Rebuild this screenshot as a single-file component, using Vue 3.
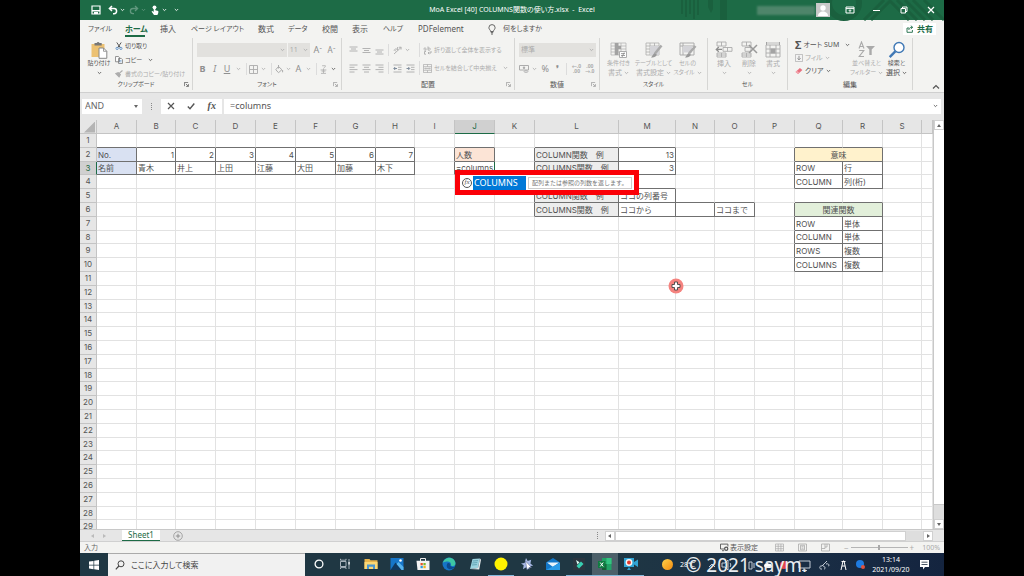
<script setup>
const menu = ['ファイル', 'ホーム', '挿入', 'ページ レイアウト', '数式', 'データ', '校閲', '表示', 'ヘルプ', 'PDFelement']
const kana = ['ファイル', 'ページ レイアウト', 'データ', 'ヘルプ']
const columns = 'ABCDEFGHIJKLMNOPQRST'.split('')
const widths = [17, 40, 39, 40, 40, 40, 40, 40, 39, 40, 40, 40, 84, 57, 39, 40, 40, 48, 40, 39]

const values = {
  A2: 'No.', B2: '1', C2: '2', D2: '3', E2: '4', F2: '5', G2: '6', H2: '7',
  A3: '名前', B3: '青木', C3: '井上', D3: '上田', E3: '江藤', F3: '大田', G3: '加藤', H3: '木下',
  J2: '人数', J3: '=columns',
  L2: 'COLUMN関数　例', M2: '13', L3: 'COLUMNS関数　例', M3: '3',
  L5: 'COLUMN関数　例', M5: 'ココの列番号', L6: 'COLUMNS関数　例', M6: 'ココから', N6: '', O6: 'ココまで',
  Q2: '意味', Q3: 'ROW', R3: '行', Q4: 'COLUMN', R4: '列(桁)',
  Q6: '関連関数', Q7: 'ROW', R7: '単体', Q8: 'COLUMN', R8: '単体', Q9: 'ROWS', R9: '複数', Q10: 'COLUMNS', R10: '複数',
}
const fills = { A2: 'blue', A3: 'blue', J2: 'peach', L2: 'gray', L3: 'gray', L5: 'gray', L6: 'gray', Q2: 'yellow', Q6: 'green' }
const merged = { Q2: 2, Q6: 2 }
const hidden = ['R2', 'R6']
const boxed = (c, r) => {
  const k = columns[c] + r
  return k in values || hidden.includes(k)
}

function cellsOf(r) {
  const out = []
  columns.forEach((name, c) => {
    const key = name + r
    if (hidden.includes(key)) return
    const span = merged[key] || 1
    out.push({
      key,
      span,
      text: values[key] || '',
      cls: [
        fills[key] || '',
        /^\d+$/.test(values[key] || '') ? 'num' : '',
        span > 1 ? 'mid' : '',
        boxed(c, r) || boxed(c + 1, r) ? 'dark-right' : '',
        boxed(c, r) || boxed(c, r + 1) ? 'dark-bottom' : '',
        key === 'J3' ? 'editing' : '',
      ],
    })
  })
  return out
}
const rows = Array.from({ length: 29 }, (_, i) => ({ n: i + 1, cells: cellsOf(i + 1) }))

const apps = [
  { id: 'cortana', label: 'Cortana' }, { id: 'taskview', label: 'タスク ビュー' }, { id: 'folder', label: 'エクスプローラー' },
  { id: 'photos', label: 'フォト' }, { id: 'store', label: 'Store' }, { id: 'edge', label: 'Edge' },
  { id: 'note', label: 'メモ' }, { id: 'yellow', label: 'ポインター', open: true }, { id: 'star', label: 'ツール' },
  { id: 'mail', label: 'メール' }, { id: 'filmora', label: '動画編集', open: true }, { id: 'excel', label: 'Excel', open: true, active: true },
  { id: 'camera', label: '録画', open: true },
]
</script>

<template>
  <svg class="defs" aria-hidden="true">
    <symbol id="i-caret" viewBox="0 0 6 4"><path d="M1 .8 3 2.8 5 .8" fill="none" stroke="currentColor" stroke-width="1" /></symbol>
    <symbol id="i-save" viewBox="0 0 10 10"><path d="M1 1h8v8H1z" fill="none" stroke="currentColor" stroke-width="1.2" /><path d="M1 5h8v1.4H1zM3 7h4v2H3z" fill="currentColor" /></symbol>
    <symbol id="i-undo" viewBox="0 0 10 10"><path d="M1.5 3.5h4.5a2.6 2.6 0 0 1 0 5.2H5M4 1 1.4 3.5 4 6" fill="none" stroke="currentColor" stroke-width="1.5" /></symbol>
    <symbol id="i-redo" viewBox="0 0 10 10"><path d="M8.5 3.5H4a2.6 2.6 0 0 0 0 5.2h1M6 1l2.6 2.5L6 6" fill="none" stroke="currentColor" stroke-width="1.3" /></symbol>
    <symbol id="i-touch" viewBox="0 0 10 10"><circle cx="4.5" cy="2.3" r="1.9" fill="currentColor" /><path d="M3.7 2h1.6v3.2l3 .7v2L7.4 10H4L1.5 6.600l1-.7 1.200 1z" fill="currentColor" /></symbol>
    <symbol id="i-opts" viewBox="0 0 10 8"><path d="M1 1h8v6H1zM1 2.600h8" fill="none" stroke="currentColor" /><path d="M5 6.500V4M3.700 5 5 3.700 6.300 5" fill="none" stroke="currentColor" stroke-width=".9" /></symbol>
    <symbol id="i-restore" viewBox="0 0 8 8"><path d="M1 2.500h4.500V7H1zM2.500 2.500V1H7v4.500H5.500" fill="none" stroke="currentColor" /></symbol>
    <symbol id="i-x" viewBox="0 0 8 8"><path d="m1 1 6 6M7 1 1 7" stroke="currentColor" stroke-width="1.2" /></symbol>
    <symbol id="i-check" viewBox="0 0 8 8"><path d="m.8 4.500 2.200 2.200L7.300 1.500" fill="none" stroke="currentColor" stroke-width="1.400" /></symbol>
    <symbol id="i-bulb" viewBox="0 0 8 11"><path d="M2.600 7.500C2.600 6 .9 5.500.9 3.700a3.100 3.100 0 0 1 6.200 0C7.100 5.500 5.400 6 5.400 7.500zM2.800 8.600h2.400M3 10h2" fill="none" stroke="currentColor" stroke-width=".9" /></symbol>
    <symbol id="i-share" viewBox="0 0 8 8"><path d="M3 3H1v4.300h5.400V5M2.800 5c.2-2 1.300-2.700 3.200-2.700M4.800.8 6.800 2.300 4.800 3.900" fill="none" stroke="currentColor" stroke-width=".9" /></symbol>
    <symbol id="i-paste" viewBox="0 0 17 18"><path d="M1 3h13v13H1z" fill="#ecc172" /><path d="M4 2h2.200a1.500 1.500 0 0 1 2.800 0h2.200v2.500H4z" fill="#777" /><path d="M8.500 7H13l3.300 3.300V17.300H8.500z" fill="#fff" stroke="#888" /><path d="M13 7v3.300h3.300" fill="none" stroke="#888" stroke-width=".8" /></symbol>
    <symbol id="i-cut" viewBox="0 0 8 9"><path d="m1.500.5 4 6M6.500.5l-4 6" stroke="#555" stroke-width="1.100" /><circle cx="1.900" cy="7.200" r="1.300" fill="none" stroke="#5b8fc7" /><circle cx="6.100" cy="7.200" r="1.300" fill="none" stroke="#5b8fc7" /></symbol>
    <symbol id="i-copy" viewBox="0 0 9 9"><path d="M.6.600H4l1 1.200v4.700H.600zM4 2.700h3l1.400 1.400V8.400H4z" fill="#fff" stroke="#777" stroke-width=".9" /><path d="M5 5h2.400M5 6.500h2.400" stroke="#5b8fc7" stroke-width=".7" /></symbol>
    <symbol id="i-brush" viewBox="0 0 9 9"><path d="m8.400.6-3.700 3.200M1 4l3.600 3.600L6 5.200 3.600 3z" stroke="currentColor" fill="currentColor" stroke-width="1.300" /></symbol>
    <symbol id="i-borders" viewBox="0 0 9 9"><path d="M.500.500h8v8h-8zM4.500.500v8M.500 4.500h8" fill="none" stroke="currentColor" stroke-width=".9" /></symbol>
    <symbol id="i-fill" viewBox="0 0 9 9"><path d="m3.500 1.500 3.400 3.200-3.400 3L.8 4.700zM3.500 0v3.500M7.600 5v2.300" fill="none" stroke="currentColor" /></symbol>
    <symbol id="i-ruby" viewBox="0 0 8 10"><path d="M2.500.800h3.600c0 1.500-1 2.200-2 2.700M.8 5.500h6.400M4 4v5M1.200 9.300h5.600M1.800 6.800h4.400" fill="none" stroke="currentColor" stroke-width=".9" /></symbol>
    <symbol id="i-top" viewBox="0 0 9 9"><path d="M.500 1h8M2 3h5M.500 5h8" stroke="currentColor" stroke-width=".9" /></symbol>
    <symbol id="i-middle" viewBox="0 0 9 9"><path d="M.500 2.500h8M2 4.500h5M.500 6.500h8" stroke="currentColor" stroke-width=".9" /></symbol>
    <symbol id="i-bottom" viewBox="0 0 9 9"><path d="M.500 4h8M2 6h5M.500 8h8" stroke="currentColor" stroke-width=".9" /></symbol>
    <symbol id="i-left" viewBox="0 0 9 9"><path d="M.500 1h8M.500 3.300h5M.500 5.600h8M.500 8h5" stroke="currentColor" stroke-width=".9" /></symbol>
    <symbol id="i-center" viewBox="0 0 9 9"><path d="M.500 1h8M2 3.300h5M.500 5.600h8M2 8h5" stroke="currentColor" stroke-width=".9" /></symbol>
    <symbol id="i-right" viewBox="0 0 9 9"><path d="M.500 1h8M3.500 3.300h5M.500 5.600h8M3.500 8h5" stroke="currentColor" stroke-width=".9" /></symbol>
    <symbol id="i-outdent" viewBox="0 0 9 9"><path d="M.500 1h8M5 3.300h3.500M5 5.600h3.500M.500 8h8" fill="none" stroke="currentColor" stroke-width=".9" /><path d="M4 4.500H1M2.200 3 .8 4.500 2.200 6" fill="none" stroke="#7f8c9c" /></symbol>
    <symbol id="i-indent" viewBox="0 0 9 9"><path d="M.500 1h8M5 3.300h3.500M5 5.600h3.500M.500 8h8" fill="none" stroke="currentColor" stroke-width=".9" /><path d="M.500 4.500h3M2.300 3l1.400 1.500L2.300 6" fill="none" stroke="#7f8c9c" /></symbol>
    <symbol id="i-rotate" viewBox="0 0 9 9"><path d="m1 8 7-6.500M5.800 1.300 8.200 1.200 8 3.600M1 4.500l2-2 1.800 2M1.500 3.800 3 5.500M4.600 1v3" fill="none" stroke="currentColor" stroke-width=".9" /></symbol>
    <symbol id="i-wrap" viewBox="0 0 9 9"><path d="M1 3.500V2.300c1-.6 2-.5 2 .6v1.200H1.300M5 .5v3.600h1.600c1.200-.6.800-2-.2-2H5M3 5.500H1.500v2.700H3M5 7h3V5M6.200 5.800 5 7l1.200 1.200" fill="none" stroke="currentColor" stroke-width=".9" /></symbol>
    <symbol id="i-merge" viewBox="0 0 10 10"><path d="M.500.500h9v9h-9zM.500 3h9M.500 7h9M5 .500V3M5 7v2.500M2 5h6M3 4 2 5l1 1M7 4l1 1-1 1" fill="none" stroke="currentColor" stroke-width=".8" /></symbol>
    <symbol id="i-money" viewBox="0 0 10 9"><path d="M.500 1h9v4.500h-9z" fill="none" stroke="currentColor" /><circle cx="5" cy="3.300" r="1.200" fill="currentColor" /><ellipse cx="7" cy="7" rx="2" ry="1" fill="#ddd" stroke="currentColor" stroke-width=".7" /></symbol>
    <symbol id="i-grid" viewBox="0 0 18 18"><path d="M1 2h13v12H1zM1 5h13M1 8h13M1 11h13M5 2v12M9.500 2v12" fill="none" stroke="currentColor" stroke-width=".8" /></symbol>
    <symbol id="i-cond" viewBox="0 0 18 18"><path d="M1 2h15v12H1zM1 5h15M1 8h15M1 11h15M5 2v12M11 2v12" fill="none" stroke="currentColor" stroke-width=".7" /><path d="M5 2h3.500v12H5zM8 5h3v3H8z" fill="#a2a2a2" /><path d="M9.500 10.500h7v6h-7z" fill="#fff" stroke="currentColor" /><path d="M11 12.600h4M11 14.500h4M12 16l2.200-4.500" stroke="#888" stroke-width=".8" /></symbol>
    <symbol id="i-tablefmt" viewBox="0 0 18 18"><use href="#i-grid" /><path d="M5 5h9v9H5z" fill="#d4d4d8" /><path d="m16.500 4.500-6.500 8" stroke="#aaa" stroke-width="2.500" /><path d="M6 16.500c2 0 5.500-.5 5.800-3L9.300 12z" fill="#999" /></symbol>
    <symbol id="i-cellstyle" viewBox="0 0 18 18"><path d="M1 2h14v12H1zM1 5h14M4 2v12" fill="none" stroke="currentColor" /><path d="M4 5h9v6.500H4z" fill="#d4d4d8" /><path d="m16.500 5-6.500 7.500" stroke="#aaa" stroke-width="2.500" /><path d="M6 16.500c2 0 5.500-.5 5.800-3L9.300 12z" fill="#999" /></symbol>
    <symbol id="i-insert" viewBox="0 0 18 18"><path d="M2 1h9v4H2zM2 12h9v4H2zM6.500 1v4M6.500 12v4M2 14h9M8 6.500h9v3.800H8zM12.500 6.500v3.800" fill="none" stroke="currentColor" stroke-width=".9" /><path d="M7 8.400H1.500M3.800 6 1.300 8.400l2.500 2.400" fill="none" stroke="#8d8d8d" stroke-width="1.300" /></symbol>
    <symbol id="i-delete" viewBox="0 0 18 18"><path d="M2 1h9v4H2zM2 12h9v4H2zM6.500 1v4M6.500 12v4M2 14h9M5 6.500h6v3.800H5z" fill="none" stroke="currentColor" stroke-width=".9" /><path d="m9 4 8 8M17 4l-8 8" stroke="#999" stroke-width="1.500" /></symbol>
    <symbol id="i-format" viewBox="0 0 18 18"><path d="M2 4h14v12H2zM2 8h14M2 12h14M6 4v12M12 4v12" fill="none" stroke="currentColor" stroke-width=".9" /><path d="M6.500 7.500h5v5h-5zM2 1h1v3H2zM15 1h1v3h-1z" fill="#a4a4a4" /><path d="M3 2h12" stroke="#bbb" /></symbol>
    <symbol id="i-down" viewBox="0 0 9 9"><path d="M.500.500h8v8h-8z" fill="#f3f3f3" stroke="currentColor" stroke-width=".8" /><path d="M4.500 2v4.500M2.700 4.800l1.800 1.800 1.800-1.800" fill="none" stroke="#888" /></symbol>
    <symbol id="i-eraser" viewBox="0 0 9 8"><path d="M.600 5 5.500.600 8.300 3 3.500 7.400z" fill="#e8707f" /><path d="M.600 5 2 3.700 4.900 6.100 3.500 7.400z" fill="#f3a8b0" /></symbol>
    <symbol id="i-sort" viewBox="0 0 18 18"><path d="M1 7.500 3.500 1 6 7.500M2 5.500h3M1.200 9.500h4.600L1.200 15.500h4.800" fill="none" stroke="#aaa" stroke-width="1.100" /><path d="M8 5h9l-3.300 3.500V14h-2.400V8.500z" fill="#aaa" /></symbol>
    <symbol id="i-find" viewBox="0 0 18 18"><circle cx="11" cy="6.500" r="5" fill="#fff" stroke="#3f78b5" stroke-width="1.400" /><path d="m7.300 10.300-5.600 5.800" stroke="#3f78b5" stroke-width="2.400" /></symbol>
    <symbol id="i-launch" viewBox="0 0 6 6"><path d="M.500 5V.500H5M2.300 2.300l2.800 2.800M5.300 2.500v2.800H2.500" fill="none" stroke="currentColor" stroke-width=".9" /></symbol>
    <symbol id="i-plus" viewBox="0 0 10 10"><circle cx="5" cy="5" r="4.300" fill="none" stroke="currentColor" stroke-width=".7" /><path d="M5 2.800v4.400M2.800 5h4.400" stroke="currentColor" stroke-width=".9" /></symbol>
    <symbol id="i-screen" viewBox="0 0 9 8"><path d="M4 5.500H.500V.600h7.400V3M2 7.200h2" fill="none" stroke="currentColor" stroke-width=".9" /><circle cx="6.200" cy="5.300" r="1.600" fill="none" stroke="currentColor" stroke-width="1.200" /></symbol>
    <symbol id="i-vnormal" viewBox="0 0 9 8"><path d="M.500.500h8v7h-8zM.500 2.800h8M.500 5.200h8M3.200.500v7M5.900.500v7" fill="none" stroke="currentColor" stroke-width=".7" /></symbol>
    <symbol id="i-vpage" viewBox="0 0 9 8"><path d="M.500.500h8v7h-8zM2.500 1.800h4v4.500h-4zM3.500 3.200h2M3.500 4.700h2" fill="none" stroke="currentColor" stroke-width=".8" /></symbol>
    <symbol id="i-vbreak" viewBox="0 0 9 8"><path d="M.500.500h8v7h-8zM.500 5h3.500V.500M4 3.500h2V.500" fill="none" stroke="currentColor" stroke-width=".8" /></symbol>
    <symbol id="i-win" viewBox="0 0 10 10"><path d="M0 1.500 4.500.900v3.900H0zM5.200.800 10 0v4.800H5.200zM0 5.400h4.500v3.800L0 8.600zM5.200 5.400H10V10l-4.800-.7z" fill="#fff" /></symbol>
    <symbol id="i-search" viewBox="0 0 10 10"><circle cx="6" cy="3.800" r="3" fill="none" stroke="currentColor" /><path d="M3.900 6 .800 9.300" stroke="currentColor" stroke-width="1.200" /></symbol>
    <symbol id="a-cortana" viewBox="0 0 14 14"><circle cx="7" cy="7" r="3.900" fill="none" stroke="#fff" stroke-width="1.300" /></symbol>
    <symbol id="a-taskview" viewBox="0 0 14 14"><path d="M2.500 4.500h5.500v5H2.500zM2.500 1.800v1.400H8V1.800M2.500 12v-1.400H8V12M11 2v10" fill="none" stroke="#b5c0c7" stroke-width=".9" /><path d="M10.300 5h1.500v2.500h-1.500z" fill="#dfe6ea" /></symbol>
    <symbol id="a-folder" viewBox="0 0 14 14"><path d="M.500 2h5l1 1.300h7V12H.500z" fill="#e8b44c" /><path d="M.500 5h13v7H.500z" fill="#fbd775" /><path d="M3 7.500h8V12H9V9.800H5V12H3z" fill="#4b96cf" /></symbol>
    <symbol id="a-photos" viewBox="0 0 14 14"><path d="M.500 1h13v12H.500z" fill="#1675c8" /><path d="m.500 13 5-7.500 7 7.500z" fill="#10385f" /><path d="m6.500 7 2-2 5 5v3h-2z" fill="#57b3ed" /><circle cx="10.500" cy="3.500" r="1.300" fill="#fff" /></symbol>
    <symbol id="a-store" viewBox="0 0 14 14"><path d="M4.500 4V1.500h5V4" fill="none" stroke="#eee" /><path d="M.500 3.800h13V13H1.500z" fill="#f3f3f3" /><path d="M4.500 6h2.300v2.300H4.500z" fill="#e5542b" /><path d="M7.400 6h2.300v2.300H7.400z" fill="#7ab82e" /><path d="M4.500 8.900h2.300v2.300H4.500z" fill="#2e9fdb" /><path d="M7.400 8.900h2.300v2.300H7.400z" fill="#f5b51c" /></symbol>
    <symbol id="a-edge" viewBox="0 0 14 14"><circle cx="7" cy="7" r="6.500" fill="#1674c6" /><path d="M.800 6C2 1.500 6 .300 9 .900c4 1 5.200 5 4 7-1 1.500-4 1.300-4.300.3.800-2-.7-3.700-3-3.700C3.500 4.500 1.500 5 .800 6z" fill="#3dc6a4" /><path d="M8.200 8.500c1 1.500 3 2 4.800 1-1.500 2.500-4 3.200-6 2.500-2.500-1-3-4-1.200-6 1.600-.5 3 .8 2.400 2.500z" fill="#0d4a8c" /></symbol>
    <symbol id="a-note" viewBox="0 0 14 14"><path d="m4.500 2 7.500-.5-2 9.500-8 1z" fill="#9bd3df" /><path d="m12 1.500 1 1.300-1.800 9.700-9.200-.5 8-1z" fill="#e7ecee" /><path d="m5 4 5-.4M4.300 6l5-.4M3.900 8l5-.4" stroke="#4b91a4" stroke-width=".7" /></symbol>
    <symbol id="a-yellow" viewBox="0 0 14 14"><circle cx="7" cy="7" r="6.500" fill="#fff200" /></symbol>
    <symbol id="a-star" viewBox="0 0 14 14"><path d="m6 1 1.700 3 3.500-1.200-.8 3.700 2.800 2.200-3.600.4-.4 3.400-3-2.300-3.200 2 .7-4L1 6.500l3.600-.6z" fill="#a8b9e5" /><path d="m5.500 4 6 6.500H9l-2 2.500z" fill="#fff" stroke="#4b598b" stroke-width=".5" /></symbol>
    <symbol id="a-mail" viewBox="0 0 14 14"><path d="M0 5.500 7 1l7 4.500V13H0z" fill="#1378c9" /><path d="M1 5.500h12L7 10z" fill="#e9f4fc" /><path d="m0 13 14-7.300V13z" fill="#2b9ce8" /></symbol>
    <symbol id="a-filmora" viewBox="0 0 14 14"><path d="M1 1h12v12H1z" fill="#2b3640" /><path d="m4 3 3.500 2.300L5.500 7.500z" fill="#d9fbf2" /><path d="m6.500 7 2.500-2.500L11.500 7 7 11.500 4.500 9z" fill="#37d0b2" /></symbol>
    <symbol id="a-excel" viewBox="0 0 14 14"><path d="M4 1h9.500v12H4z" fill="#21a366" /><path d="M8.500 1h5v6h-5z" fill="#33c481" /><path d="M4 7h4.500v6H4z" fill="#185c37" /><path d="M0 4h7.500v7H0z" fill="#107c41" /><path d="m2.200 5.500 3 4M5.200 5.500l-3 4" stroke="#fff" /></symbol>
    <symbol id="a-camera" viewBox="0 0 14 14"><path d="M0 1h10v9H0zM10 5l4-2.500v7.500l-4-2.500zM3 13l2-3 2 3z" fill="#31a4d5" /><circle cx="5" cy="5.500" r="3.400" fill="#f7f7f7" /><circle cx="5" cy="5.500" r="2" fill="#e23a2e" /></symbol>
  </svg>

  <div class="desktop">
    <header class="title">
      <svg class="pattern" viewBox="0 0 270 20" preserveAspectRatio="xMaxYMid slice" aria-hidden="true">
        <path d="M8 0v14M12 0v17M16 0v14M20 0v19M24 0v15" stroke="#1a603e" stroke-width="2" />
        <path d="M34 0h5v9l-2 4-3-6zM46 0h7v20h-7z" fill="#1a603e" />
        <circle cx="170" cy="3" r="15" fill="none" stroke="#1a603e" stroke-width="6" />
        <path d="m190 20 20-20M197 20l20-20M215 0l20 20M223 0l20 20M231 0l20 20M239 0l20 20M250 0l20 20" stroke="#1a603e" stroke-width="3" />
      </svg>
      <div class="quick">
        <button aria-label="保存"><svg class="s10"><use href="#i-save" /></svg></button>
        <button aria-label="元に戻す"><svg class="s10"><use href="#i-undo" /></svg><svg class="caret"><use href="#i-caret" /></svg></button>
        <button aria-label="やり直し" class="faded"><svg class="s10"><use href="#i-redo" /></svg><svg class="caret"><use href="#i-caret" /></svg></button>
        <button aria-label="タッチ"><svg class="s10"><use href="#i-touch" /></svg><svg class="caret"><use href="#i-caret" /></svg></button>
        <button aria-label="カスタマイズ"><svg class="caret"><use href="#i-caret" /></svg></button>
      </div>
      <h1>MoA Excel [40] COLUMNS関数の使い方.xlsx&nbsp; -&nbsp; Excel</h1>
      <div class="controls">
        <span class="user"></span>
        <svg class="avatar" viewBox="0 0 14 14"><path d="M0 0h14v14H0z" fill="#c9c9c9" /><circle cx="7" cy="5" r="2.700" fill="#fff" /><path d="M2 13c0-6 10-6 10 0z" fill="#fff" /></svg>
        <button aria-label="リボンの表示オプション"><svg class="s10"><use href="#i-opts" /></svg></button>
        <button aria-label="最小化"><span class="minus"></span></button>
        <button aria-label="元のサイズ"><svg class="s8"><use href="#i-restore" /></svg></button>
        <button aria-label="閉じる"><svg class="s8"><use href="#i-x" /></svg></button>
      </div>
    </header>

    <nav class="menu">
      <button v-for="m in menu" :key="m" :class="{ on: m === 'ホーム', kana: kana.includes(m) }">{{ m }}</button>
      <button class="tell kana"><svg class="bulb"><use href="#i-bulb" /></svg>何をしますか</button>
      <button class="share"><svg class="s8"><use href="#i-share" /></svg>共有</button>
    </nav>

    <section class="ribbon">
      <div class="group">
        <div class="body clip">
          <button class="big strong"><svg><use href="#i-paste" /></svg><span>貼り付け</span><svg class="caret"><use href="#i-caret" /></svg></button>
          <div class="stack">
            <button class="strong"><svg class="s8"><use href="#i-cut" /></svg>切り取り</button>
            <button class="strong"><svg class="s8"><use href="#i-copy" /></svg>コピー<svg class="caret wide"><use href="#i-caret" /></svg></button>
            <button><svg class="s8"><use href="#i-brush" /></svg>書式のコピー/貼り付け</button>
          </div>
        </div>
        <footer>クリップボード<svg class="launch strong"><use href="#i-launch" /></svg></footer>
      </div>

      <div class="group">
        <div class="body lines">
          <div class="line">
            <span class="pick family"><select aria-label="フォント" disabled><option></option></select><svg class="caret"><use href="#i-caret" /></svg></span>
            <span class="pick size"><select aria-label="フォント サイズ" disabled><option>11</option></select><svg class="caret"><use href="#i-caret" /></svg></span>
            <button class="glyph">A<sup>ˆ</sup></button>
            <button class="glyph small">A<sup>ˇ</sup></button>
          </div>
          <div class="line fontrow">
            <button class="glyph biu"><b>B</b></button><button class="glyph biu"><i>I</i></button>
            <button class="glyph biu"><u>U</u></button><svg class="caret"><use href="#i-caret" /></svg><hr />
            <button aria-label="罫線"><svg class="s9"><use href="#i-borders" /></svg></button><svg class="caret"><use href="#i-caret" /></svg><hr />
            <button aria-label="塗りつぶし"><svg class="s9"><use href="#i-fill" /></svg></button><svg class="caret"><use href="#i-caret" /></svg>
            <button class="glyph">A</button><svg class="caret"><use href="#i-caret" /></svg><hr />
            <button aria-label="ふりがな"><svg class="s9"><use href="#i-ruby" /></svg></button><svg class="caret strong"><use href="#i-caret" /></svg>
          </div>
        </div>
        <footer>フォント<svg class="launch"><use href="#i-launch" /></svg></footer>
      </div>

      <div class="group">
        <div class="body align">
          <div class="alignrow">
            <button aria-label="上揃え"><svg class="s9"><use href="#i-top" /></svg></button>
            <button aria-label="上下中央"><svg class="s9"><use href="#i-middle" /></svg></button>
            <button aria-label="下揃え"><svg class="s9"><use href="#i-bottom" /></svg></button><hr />
            <button aria-label="方向"><svg class="s9"><use href="#i-rotate" /></svg></button><svg class="caret"><use href="#i-caret" /></svg>
          </div>
          <button class="wide-cmd"><svg class="s9"><use href="#i-wrap" /></svg>折り返して全体を表示する</button>
          <div class="alignrow">
            <button aria-label="左揃え"><svg class="s9"><use href="#i-left" /></svg></button>
            <button aria-label="中央揃え"><svg class="s9"><use href="#i-center" /></svg></button>
            <button aria-label="右揃え"><svg class="s9"><use href="#i-right" /></svg></button><hr />
            <button aria-label="インデント解除"><svg class="s9"><use href="#i-outdent" /></svg></button>
            <button aria-label="インデント"><svg class="s9"><use href="#i-indent" /></svg></button>
          </div>
          <button class="wide-cmd"><svg class="s9"><use href="#i-merge" /></svg>セルを結合して中央揃え<svg class="caret end"><use href="#i-caret" /></svg></button>
        </div>
        <footer class="kanji">配置<svg class="launch"><use href="#i-launch" /></svg></footer>
      </div>

      <div class="group">
        <div class="body lines">
          <div class="line"><span class="pick format"><select aria-label="表示形式" disabled><option>標準</option></select><svg class="caret"><use href="#i-caret" /></svg></span></div>
          <div class="line numrow">
            <button aria-label="通貨"><svg class="s10"><use href="#i-money" /></svg></button><svg class="caret"><use href="#i-caret" /></svg>
            <button class="glyph">%</button><button class="glyph"><b>❜</b></button><hr />
            <button class="dec">←.0<br />.00</button><button class="dec">.00<br />→.0</button>
          </div>
        </div>
        <footer class="kanji">数値<svg class="launch"><use href="#i-launch" /></svg></footer>
      </div>

      <div class="group">
        <div class="body styles">
          <button class="big"><svg><use href="#i-cond" /></svg><span>条件付き</span><span class="kanji">書式<svg class="caret"><use href="#i-caret" /></svg></span></button>
          <button class="big"><svg><use href="#i-tablefmt" /></svg><span>テーブルとして</span><span class="kanji">書式設定<svg class="caret"><use href="#i-caret" /></svg></span></button>
          <button class="big"><svg><use href="#i-cellstyle" /></svg><span>セルの</span><span>スタイル<svg class="caret"><use href="#i-caret" /></svg></span></button>
        </div>
        <footer>スタイル</footer>
      </div>

      <div class="group">
        <div class="body cellsgrp">
          <button class="big kanji"><svg><use href="#i-insert" /></svg><span>挿入</span><svg class="caret"><use href="#i-caret" /></svg></button>
          <button class="big kanji"><svg><use href="#i-delete" /></svg><span>削除</span><svg class="caret"><use href="#i-caret" /></svg></button>
          <button class="big kanji"><svg><use href="#i-format" /></svg><span>書式</span><svg class="caret"><use href="#i-caret" /></svg></button>
        </div>
        <footer>セル</footer>
      </div>

      <div class="group">
        <div class="body edit">
          <div class="stack">
            <button class="strong"><b class="sigma">Σ</b>オート SUM<svg class="caret wide"><use href="#i-caret" /></svg></button>
            <button><svg class="s8"><use href="#i-down" /></svg>フィル<svg class="caret"><use href="#i-caret" /></svg></button>
            <button class="strong"><svg class="s8"><use href="#i-eraser" /></svg>クリア<svg class="caret"><use href="#i-caret" /></svg></button>
          </div>
          <button class="big"><svg><use href="#i-sort" /></svg><span>並べ替えと</span><span>フィルター<svg class="caret"><use href="#i-caret" /></svg></span></button>
          <button class="big strong"><svg><use href="#i-find" /></svg><span>検索と</span><span class="kanji">選択<svg class="caret"><use href="#i-caret" /></svg></span></button>
        </div>
        <footer class="kanji">編集</footer>
      </div>
      <button class="collapse" aria-label="リボンを折りたたむ"><svg class="s8" viewBox="0 0 8 8"><path d="m1 5.500 3-3 3 3" fill="none" stroke="currentColor" stroke-width="1.200" /></svg></button>
    </section>

    <section class="formula">
      <label class="namebox"><input value="AND" aria-label="名前ボックス" /><i class="tri"></i></label>
      <span class="dots"></span>
      <div class="fx">
        <button aria-label="キャンセル"><svg class="s8"><use href="#i-x" /></svg></button>
        <button aria-label="入力"><svg class="s8"><use href="#i-check" /></svg></button>
        <button class="fxb">fx</button>
      </div>
      <label class="entry"><input value="=columns" aria-label="数式バー" /><svg class="caret"><use href="#i-caret" /></svg></label>
    </section>

    <main class="sheet">
      <div class="canvas">
        <table>
          <colgroup><col v-for="(w, i) in widths" :key="i" :style="{ width: w + 'px' }" /><col /></colgroup>
          <thead>
            <tr><th class="corner"><i></i></th><th v-for="c in columns" :key="c" :class="{ cur: c === 'J' }">{{ c === 'T' ? '' : c }}</th></tr>
          </thead>
          <tbody>
            <tr v-for="row in rows" :key="row.n">
              <th :class="{ cur: row.n === 3 }">{{ row.n }}</th>
              <td v-for="cell in row.cells" :key="cell.key" :colspan="cell.span" :class="cell.cls"><div>{{ cell.text }}</div></td>
            </tr>
          </tbody>
        </table>
        <div class="suggest">
          <div class="item"><span class="fxicon">fx</span><strong>COLUMNS</strong></div>
          <div class="tip">配列または参照の列数を返します。</div>
        </div>
        <svg class="pointer" viewBox="0 0 16 16"><circle cx="8" cy="8" r="7.500" fill="#f5837f" /><path d="M6.500 4h3v2.500H12v3H9.500V12h-3V9.500H4v-3h2.500z" fill="#fff" stroke="#444" stroke-width=".9" /></svg>
      </div>
      <div class="vscroll"><button aria-label="上"><i class="tri up"></i></button><span class="thumb"></span><button aria-label="下"><i class="tri"></i></button></div>
    </main>

    <section class="tabs">
      <i class="tri lft pale"></i><i class="tri rgt pale"></i>
      <button class="tab">Sheet1</button>
      <button class="add" aria-label="新しいシート"><svg class="s10"><use href="#i-plus" /></svg></button>
      <span class="dots"></span>
      <div class="hscroll"><button aria-label="左"><i class="tri lft"></i></button><span class="thumb"></span><button aria-label="右"><i class="tri rgt"></i></button></div>
    </section>

    <section class="status">
      <span class="mode">入力</span>
      <button class="disp"><svg class="s9"><use href="#i-screen" /></svg>表示設定</button>
      <button aria-label="標準"><svg class="s9"><use href="#i-vnormal" /></svg></button>
      <button aria-label="ページ レイアウト"><svg class="s9"><use href="#i-vpage" /></svg></button>
      <button aria-label="改ページ"><svg class="s9"><use href="#i-vbreak" /></svg></button>
      <label class="zoom"><span>−</span><input type="range" aria-label="ズーム" /><span>+</span></label>
      <span class="pct">100%</span>
    </section>

    <footer class="taskbar">
      <button class="start" aria-label="スタート"><svg class="s10"><use href="#i-win" /></svg></button>
      <label class="find"><svg class="s10"><use href="#i-search" /></svg><input placeholder="ここに入力して検索" aria-label="検索" /></label>
      <div class="apps">
        <button v-for="a in apps" :key="a.id" :class="{ open: a.open, active: a.active }" :aria-label="a.label"><svg><use :href="'#a-' + a.id" /></svg></button>
      </div>
      <div class="tray">
        <span class="sun"></span><span class="temp">28℃</span>
        <svg class="trayicons" viewBox="0 0 160 14" aria-hidden="true">
          <g fill="none" stroke="#c3cbd5" stroke-width="1">
            <path d="m2 9 3-3 3 3M15 5h3l3-3v10l-3-3h-3zM23 5c1 1 1 3 0 4M42 4h3v7h-3zM47 5v5M92 3h11v7H92zM97 10v2M95 12.500h5" />
            <path d="M115 11c-3 1-3-4 0-3l5-5M116 8c2 0 3 3 1 3M119 6c3-1 4 2 2 2" />
            <path d="m134 12 2-9h1l2 9M135 8h3M134.500 3.500h4" stroke="#fff" />
          </g>
          <path d="M57 8c0-3 4-4 5-2 3-1 4 4 1 4h-5z" fill="#fff" />
          <circle cx="77" cy="7" r="4" fill="#e2454d" />
          <circle cx="153" cy="6" r="4" fill="#1e7be0" /><circle cx="156" cy="9" r="2" fill="#e0523d" />
        </svg>
        <div class="clock"><span>13:14</span><span>2021/09/20</span></div>
        <svg class="note" viewBox="0 0 11 11"><path d="M1 1h9v7H6l-2 2.500V8H1z" fill="#fff" /><path d="M2.500 3.200h6M2.500 5.500h6" stroke="#1a2b3e" stroke-width=".8" /></svg>
      </div>
      <div class="mark">© 2021 saym.</div>
    </footer>
  </div>
</template>

<style>
body { margin: 0; background: #000; }
</style>

<style scoped>
* { box-sizing: border-box; }
.defs { position: absolute; width: 0; height: 0; }
.desktop { display: flex; flex-direction: column; height: 100vh; margin: 0 80px; background: #e6e6e6; color: #555; font: 8px/10px "Noto Sans", "Noto Sans CJK JP", sans-serif; font-feature-settings: "palt"; white-space: nowrap; overflow: hidden; }
button, input, select { font: inherit; color: inherit; border: 0; background: none; padding: 0; margin: 0; font-feature-settings: inherit; min-width: 0; }
button { display: flex; align-items: center; justify-content: center; }
svg { flex: none; display: block; overflow: visible; }
.s8 { width: 8px; height: 8px; }
.s9 { width: 9px; height: 9px; }
.s10 { width: 10px; height: 10px; }
.caret { width: 5px; height: 4px; }
.tri { display: block; width: 0; height: 0; border: 2px solid transparent; border-top: 3px solid #666; border-bottom: 0; }
.tri.up { border-bottom: 3px solid #666; border-top: 0; }
.tri.lft { border: 2px solid transparent; border-right: 3px solid #666; border-left: 0; }
.tri.rgt { border: 2px solid transparent; border-left: 3px solid #666; border-right: 0; }
.tri.pale { opacity: .35; }

.title { position: relative; display: grid; grid-template-columns: 1fr auto 1fr; align-items: center; height: 20px; flex: none; background: #1d6b46; color: #fff; }
.pattern { position: absolute; right: 0; top: 0; width: 270px; height: 20px; }
.quick { display: flex; gap: 4px; padding-left: 11px; }
.quick button { gap: 2px; }
.quick button:first-child { margin-right: 3px; }
.quick button:last-child { margin-left: 3px; }
.quick .faded { opacity: .3; }
h1 { position: relative; margin: 0; font-size: 7px; line-height: 10px; font-weight: 400; }
.controls { position: relative; display: flex; justify-content: flex-end; align-items: center; }
.user { width: 58px; height: 9px; background: #63917a; opacity: .7; margin-right: 1px; filter: blur(1px); }
.avatar { width: 14px; height: 14px; margin-right: 6px; }
.controls button { width: 27px; height: 20px; }
.minus { width: 7px; height: 1px; background: #fff; }

.menu { display: grid; grid-template-columns: 37px 35px 31px 67px 30px 34px 30px 31px 35px 70px 1fr 33px; height: 18px; flex: none; padding: 0 8px; background: #f3f3f1; align-items: center; }
.menu button { justify-content: flex-start; height: 12px; }
.menu .kana { font-size: 7px; }
.menu .on { position: relative; color: #1d6b46; font-weight: 700; }
.menu .on::after { content: ""; position: absolute; left: 0; width: 20px; bottom: -2px; height: 2px; background: #1d6b46; }
.menu .tell { gap: 7px; }
.bulb { width: 8px; height: 11px; }
.menu .share { background: #fff; color: #1d6b46; font-weight: 700; justify-content: center; gap: 3px; }

.ribbon { display: grid; grid-template-columns: 113px 149px 173px 85px 108px 80px 125px 1fr; height: 55px; flex: none; background: #f3f3f1; border-bottom: 1px solid #cfcfcf; color: #acacac; font-size: 6px; }
.group { position: relative; display: flex; flex-direction: column; border-right: 1px solid #d6d6d4; margin-bottom: 2px; min-width: 0; }
.body { flex: 1; min-height: 0; }
.group footer { position: relative; height: 9px; line-height: 9px; text-align: center; color: #555; margin-bottom: 1px; }
.ribbon .kanji { font-size: 7px; }
.launch { position: absolute; right: 3px; top: 2px; width: 5px; height: 5px; color: #999; }
.strong { color: #555; }
.clip { display: grid; grid-template-columns: 32px 1fr; padding: 0 0 0 3px; }
.big { flex-direction: column; justify-content: flex-start; line-height: 9px; padding-top: 3px; }
.big > svg:first-child { width: 18px; height: 18px; }
.big > .caret { margin-top: 3px; }
.big span { display: flex; align-items: center; gap: 2px; height: 9px; }
.stack { display: flex; flex-direction: column; gap: 4px; padding-top: 3px; }
.stack button { justify-content: flex-start; gap: 2px; height: 10px; }
.caret.wide { margin-left: 4px; }
.lines { display: flex; flex-direction: column; gap: 5px; padding: 5px 3px 0 4px; }
.line { display: flex; align-items: center; gap: 1px; height: 14px; }
.pick { display: flex; align-items: center; background: #e2e1de; height: 14px; padding-right: 2px; }
.pick select { appearance: none; flex: 1; padding-left: 2px; opacity: 1; font-size: 7px; }
.family { width: 91px; }
.size { width: 23px; }
.format { flex: 1; }
.glyph { font-size: 9px; color: #8f8f8f; width: 13px; }
.glyph sup { font-size: 7px; line-height: 5px; }
.glyph.small { font-size: 8px; }
.fontrow .glyph { width: 9px; }
.fontrow .biu { width: 12px; }
.fontrow .caret, .numrow .caret { margin: 0 2px; }
hr { width: 1px; height: 12px; background: #dcdcdc; border: 0; margin: 0 2px; }
.align { display: grid; grid-template-columns: 71px 1fr; grid-template-rows: 14px 14px; row-gap: 4px; padding: 5px 0 0 7px; }
.alignrow { display: flex; align-items: center; gap: 4px; border-right: 1px solid #dcdcdc; }
.alignrow hr { margin: 0; }
.alignrow .caret { margin-left: -1px; }
.wide-cmd { justify-content: flex-start; gap: 2px; padding-left: 3px; }
.caret.end { margin-left: 4px; }
.numrow .glyph { width: 12px; }
.dec { font-size: 5px; line-height: 5px; font-weight: 700; width: 13px; }
.styles { display: grid; grid-template-columns: 37px 33px 35px; }
.cellsgrp { display: grid; grid-template-columns: 26px 24px 24px; padding-left: 3px; }
.edit { display: grid; grid-template-columns: 55px 33px 27px; padding-left: 7px; }
.edit .stack { gap: 3px; padding-top: 2px; font-size: 7px; }
.sigma { font-size: 11px; width: 8px; }
.collapse { align-self: end; justify-self: end; padding: 0 4px 1px 0; color: #555; }

.formula { display: grid; grid-template-columns: 60px 15px 61px 1fr; gap: 0 2px; align-items: center; height: 27px; flex: none; padding: 0 3px 1px 2px; }
.namebox, .entry, .fx { display: flex; align-items: center; background: #fff; height: 15px; }
.namebox { padding: 0 4px 0 3px; font-size: 9px; color: #666; }
.namebox input, .entry input { flex: 1; }
.entry { padding: 0 3px 0 6px; font-size: 9px; color: #555; }
.dots { width: 1px; height: 7px; justify-self: center; border-left: 1px dotted #888; }
.fx { justify-content: space-around; color: #555; }
.fxb { font: italic 700 10px/10px "Liberation Serif", serif; }

.sheet { display: flex; flex: 1; min-height: 0; }
.canvas { position: relative; flex: 1; min-width: 0; overflow: hidden; background: #fff; }
table { width: 100%; table-layout: fixed; border-collapse: separate; border-spacing: 0; font: 8px/11px Inter, "Noto Sans CJK JP", sans-serif; font-feature-settings: normal; color: #505050; }
th, td { height: 14px; padding: 0; overflow: hidden; border: 0 solid #e2e2e2; border-width: 0 1px 1px 0; }
tbody tr:nth-child(5n+3) > * { height: 13px; }
th { background: #e6e6e6; font-weight: 400; border-color: #c4c4c4; text-align: center; color: #555; }
td div { height: 12px; line-height: 12px; overflow: hidden; padding: 0 1px; }
.corner i { display: block; margin: 1px 1px 0 auto; width: 11px; height: 11px; background: #b4b4b4; clip-path: polygon(100% 0, 100% 100%, 0 100%); }
thead .cur { background: #d0d0d0; border-bottom-color: #1d6b46; color: #1d6b46; }
tbody .cur { background: #d0d0d0; border-right-color: #1d6b46; color: #1d6b46; }
.dark-right { border-right-color: #707070; }
.dark-bottom { border-bottom-color: #707070; }
.blue { background: #d9e1f2; }
.peach { background: #fce4d6; }
.gray { background: #ededed; }
.yellow { background: #fff2cc; }
.green { background: #e2efda; }
.num { text-align: right; }
.mid { text-align: center; }
.editing { border-right-color: #1d6b46; }
.suggest { position: absolute; left: 375px; top: 50px; width: 184px; height: 25px; border: 5px solid #fb0007; background: #fff; display: flex; align-items: center; gap: 2px; padding-left: 2px; }
.item { display: flex; align-items: center; height: 14px; }
.fxicon { width: 10px; height: 10px; border: 1px solid #555; border-radius: 5px; font: italic 7px/7px "Liberation Serif", serif; text-align: center; margin-right: 1px; }
.item strong { width: 53px; height: 14px; padding-left: 1px; line-height: 14px; background: #0078d7; color: #fff; font-weight: 400; font-size: 9px; }
.tip { flex: 1; height: 12px; line-height: 10px; border: 1px solid #ccc; font-size: 6px; font-feature-settings: normal; padding-left: 3px; color: #777; margin-right: 2px; }
.pointer { position: absolute; left: 588px; top: 158px; width: 16px; height: 16px; }
.vscroll { width: 11px; display: flex; flex-direction: column; background: #dedede; border-left: 1px solid #c8c8c8; }
.vscroll button { height: 10px; background: #fff; border: 1px solid #d0d0d0; }
.vscroll .thumb { flex: 1; background: #fff; margin-bottom: 14px; border-bottom: 1px solid #c8c8c8; }

.tabs { display: flex; align-items: center; height: 12px; flex: none; border-top: 1px solid #c8c8c8; }
.tabs .tri { margin-left: 11px; }
.tabs .tri + .tri { margin-left: 9px; }
.tab { width: 38px; height: 11px; margin-left: 16px; background: #fff; color: #1d6b46; border-bottom: 1px solid #1d6b46; align-self: flex-start; }
.add { margin-left: 13px; color: #888; }
.tabs .dots { margin-left: auto; }
.hscroll { display: flex; width: 38%; height: 10px; margin: 0 11px 0 7px; background: #dedede; }
.hscroll button { width: 10px; background: #fff; border: 1px solid #d0d0d0; }
.hscroll button .tri { margin: 0; }
.hscroll .thumb { flex: 1; background: #fff; margin-right: 17px; border: 1px solid #d0d0d0; }

.status { display: flex; align-items: center; height: 12px; flex: none; background: #f3f3f1; border-top: 1px solid #d0d0d0; padding: 0 4px; font-size: 7px; color: #aaa; gap: 14px; }
.mode { margin-right: auto; color: #666; }
.disp { gap: 1px; color: #555; margin-right: 3px; }
.zoom { display: flex; align-items: center; gap: 2px; font-size: 8px; }
.zoom input { appearance: none; width: 57px; height: 1px; background: #b5b5b5; }
.zoom input::-webkit-slider-thumb { appearance: none; width: 2px; height: 5px; background: #aaa; }
.pct { margin-left: -6px; }

.taskbar { position: relative; display: flex; height: 23px; flex: none; background: linear-gradient(90deg, #1f3743 0 60%, #1b3046 80%, #14243f); color: #fff; }
.start { width: 28px; }
.find { display: flex; align-items: center; gap: 6px; width: 197px; background: #f1f1f1; color: #444; padding-left: 7px; border-top: 1px solid #aaa; }
.find input { flex: 1; }
.find input::placeholder { color: #444; opacity: 1; }
.apps { display: flex; margin-left: 1px; }
.apps button { width: 26px; border: 0 solid transparent; border-bottom-width: 1px; }
.apps .open { border-color: #85b9dc; }
.apps .active { background: #4c6069; }
.apps svg { width: 14px; height: 14px; }
.tray { display: flex; flex: 1; align-items: center; padding: 0 14px 0 18px; min-width: 0; }
.sun { width: 11px; height: 11px; flex: none; border-radius: 50%; background: linear-gradient(135deg, #ffd24a, #f38b10); }
.temp { margin: 0 12px 0 7px; font-size: 7px; }
.trayicons { width: 160px; height: 14px; }
.clock { display: flex; flex-direction: column; align-items: center; font-size: 7px; margin: 0 auto; }
.note { width: 11px; height: 11px; margin-left: 4px; }
.mark { position: absolute; right: 137px; bottom: 0; font-size: 19px; line-height: 21px; color: #e9edf0; }
</style>
